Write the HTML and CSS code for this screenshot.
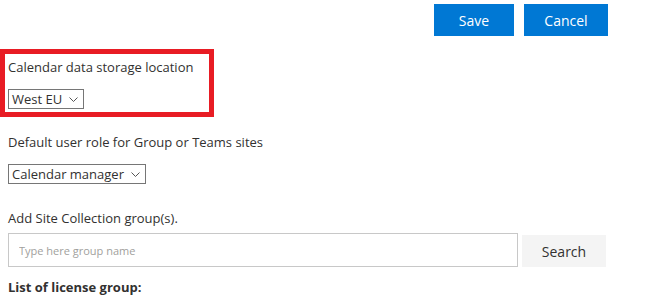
FILE: index.html
```html
<!DOCTYPE html>
<html lang="en">
<head>
<meta charset="utf-8">
<title>Settings</title>
<link rel="stylesheet" href="styles.css">
</head>
<body>
<div class="page">
  <div class="actions">
    <button class="btn btn-primary">Save</button>
    <button class="btn btn-primary btn-cancel">Cancel</button>
  </div>

  <div class="field field-storage">
    <div class="label">Calendar data storage location</div>
    <div class="select select-region">
      <span class="select-text">West EU</span>
      <svg class="chev" width="9" height="5" viewBox="0 0 9 5"><path d="M0.5 0.5 L4.5 4.5 L8.5 0.5" fill="none" stroke="#555" stroke-width="1"/></svg>
    </div>
    <div class="highlight"></div>
  </div>

  <div class="field field-role">
    <div class="label">Default user role for Group or Teams sites</div>
    <div class="select select-role">
      <span class="select-text">Calendar manager</span>
      <svg class="chev" width="9" height="5" viewBox="0 0 9 5"><path d="M0.5 0.5 L4.5 4.5 L8.5 0.5" fill="none" stroke="#555" stroke-width="1"/></svg>
    </div>
  </div>

  <div class="field field-groups">
    <div class="label">Add Site Collection group(s).</div>
    <div class="search-row">
      <input class="search-input" type="text" placeholder="Type here group name">
      <button class="btn btn-secondary">Search</button>
    </div>
  </div>

  <div class="list-title">List of license group:</div>
</div>
</body>
</html>
```

FILE: styles.css
```css
* { box-sizing: border-box; }
html, body { margin: 0; padding: 0; background: #fff; }
body {
  font-family: "Open Sans", "Noto Sans", "Liberation Sans", sans-serif;
  color: #323130;
  font-size: 13px;
}
.page {
  position: relative;
  padding: 4px 52px 0 8px;
}
.actions {
  display: flex;
  justify-content: flex-end;
  gap: 10px;
}
.btn {
  font-family: inherit;
  font-size: 14px;
  height: 32px;
  border: none;
  border-radius: 0;
  padding: 0;
  cursor: pointer;
}
.btn-primary {
  background: #0078d4;
  color: #fff;
  width: 80px;
}
.btn-cancel { width: 84px; }
.btn-secondary {
  background: #f4f4f4;
  color: #323130;
  width: 84px;
}
.field { position: relative; }
.label {
  line-height: 20px;
}
.field-storage { margin-top: 21px; }
.field-storage .label { margin-bottom: 12px; }
.field-role { margin-top: 23px; }
.field-role .label { margin-bottom: 12px; }
.field-groups { margin-top: 24px; }
.field-groups .label { margin-bottom: 5px; }
.select {
  display: inline-flex;
  align-items: center;
  height: 20px;
  border: 1px solid #767676;
  padding: 0 5px 0 3px;
  gap: 7px;
  line-height: 18px;
}
.chev { display: block; }
.highlight {
  position: absolute;
  left: -8px;
  top: -8px;
  width: 214px;
  height: 68px;
  border: 5px solid #e81c24;
  pointer-events: none;
}
.search-row {
  display: flex;
  align-items: flex-end;
  gap: 4px;
}
.search-input {
  width: 510px;
  height: 34px;
  border: 1px solid #c8c8c8;
  padding: 0 10px;
  font-family: inherit;
  font-size: 11px;
  color: #323130;
  outline: none;
}
.search-input::placeholder { color: #a19f9d; }
.list-title {
  font-weight: 700;
  margin-top: 10px;
  line-height: 20px;
}
```
